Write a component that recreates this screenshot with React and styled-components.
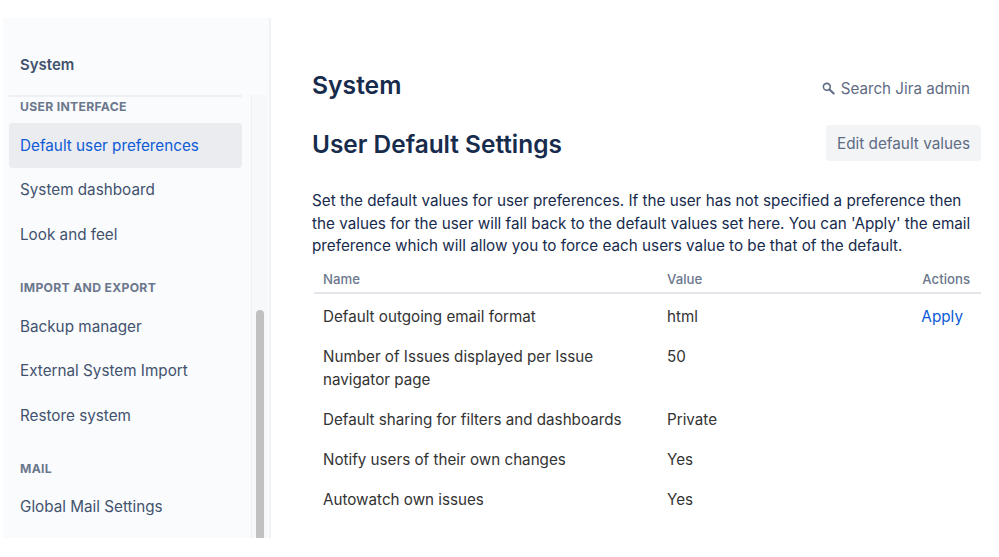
import React from "react";
import styled, { createGlobalStyle } from "styled-components";

const GlobalStyle = createGlobalStyle`
  html, body {
    margin: 0;
    padding: 0;
    background: #fff;
    font-family: Inter, "Noto Sans", sans-serif;
    overflow: hidden;
  }
`;

const Page = styled.div`
  width: 999px;
  height: 557px;
  box-sizing: border-box;
  padding: 18px 0 19px 3px;
  display: flex;
  overflow: hidden;
`;

const Sidebar = styled.aside`
  width: 266px;
  flex: none;
  background: #fafbfd;
  border-right: 2px solid #f1f2f4;
  display: flex;
  flex-direction: column;
`;

const SideTitle = styled.div`
  height: 77px;
  flex: none;
  box-sizing: border-box;
  padding: 38px 0 0 17px;
  font-size: 15px;
  line-height: 18px;
  font-weight: 600;
  color: #42526e;
`;

const SideBody = styled.div`
  flex: 1;
  min-height: 0;
  display: flex;
`;

const Nav = styled.nav`
  width: 233px;
  margin-left: 6px;
  flex: none;
  border-top: 2px solid #eef0f3;
  overflow: hidden;
`;

const Heading = styled.div`
  margin: ${(p) => p.$top}px 0 6px 11px;
  height: 20px;
  font-size: 12.2px;
  line-height: 20px;
  font-weight: 700;
  letter-spacing: 0.3px;
  color: #6b778c;
`;

const NavItem = styled.a`
  display: flex;
  align-items: center;
  height: 44.6px;
  padding-left: 11px;
  border-radius: 4px;
  font-size: 15.25px;
  color: ${(p) => (p.$active ? "#0c5bd6" : "#42526e")};
  background: ${(p) => (p.$active ? "#ebecf0" : "transparent")};
`;

const Track = styled.div`
  width: 16px;
  margin-left: 9px;
  box-sizing: border-box;
  padding: 0 3px 0 4px;
  flex: none;
  background: #f7f8f9;
  border-left: 1px solid #eeeff1;
  display: flex;
  flex-direction: column;
  justify-content: flex-end;
`;

const Thumb = styled.div`
  height: 228px;
  background: #c1c1c1;
  border-radius: 4px 4px 0 0;
`;

const Main = styled.main`
  flex: 1;
  min-width: 0;
  padding: 50px 18px 0 41px;
`;

const TopRow = styled.div`
  display: flex;
  justify-content: space-between;
  align-items: center;
  height: 34px;
`;

const Title = styled.h1`
  margin: 0;
  font-size: 24.7px;
  line-height: 34px;
  font-weight: 600;
  color: #172b4d;
`;

const SearchLink = styled.div`
  display: flex;
  align-items: center;
  gap: 6px;
  padding: 6px 11px 0 0;
  font-size: 15.2px;
  color: #5e6c84;
`;

const SettingsRow = styled.div`
  display: flex;
  justify-content: space-between;
  align-items: center;
  margin-top: 23px;
  height: 36px;
`;

const Subtitle = styled.h2`
  margin: 0;
  padding-top: 2px;
  font-size: 24.4px;
  line-height: 38px;
  font-weight: 600;
  color: #172b4d;
`;

const EditButton = styled.button`
  width: 155px;
  height: 36px;
  border: 0;
  padding: 0;
  border-radius: 4px;
  background: #f3f4f6;
  font: inherit;
  font-size: 15.3px;
  color: #5e6c84;
`;

const Intro = styled.p`
  margin: 29px 0 0;
  width: 669px;
  font-size: 15.25px;
  line-height: 22.5px;
  color: #172b4d;
`;

const Table = styled.table`
  width: 667px;
  margin: 8px 0 0 2px;
  border-collapse: collapse;
  table-layout: fixed;
`;

const HeadCell = styled.th`
  height: 27px;
  padding: 0 ${(p) => (p.$right ? "11px" : "9px")} 0 9px;
  box-sizing: border-box;
  border-bottom: 2px solid #e4e6eb;
  font-size: 13.2px;
  font-weight: 500;
  color: #6b778c;
  text-align: ${(p) => (p.$right ? "right" : "left")};
`;

const Cell = styled.td`
  padding: 11.75px 9px 5.25px;
  font-size: 15.2px;
  line-height: 23px;
  color: #333;
  vertical-align: top;
`;

const ApplyCell = styled(Cell)`
  text-align: right;
  padding-right: 18px;
`;

const ApplyLink = styled.a`
  color: #0c5bd6;
  font-size: 15.3px;
`;

function SearchIcon() {
  return (
    <svg width="13" height="13" viewBox="0 0 14 14" fill="none" stroke="#5e6c84">
      <circle cx="5.2" cy="5.2" r="3.7" strokeWidth="1.7" />
      <path d="M8 8l4.6 4.4" strokeWidth="2.2" strokeLinecap="round" />
    </svg>
  );
}

const rows = [
  ["Default outgoing email format", "html", true],
  ["Number of Issues displayed per Issue navigator page", "50"],
  ["Default sharing for filters and dashboards", "Private"],
  ["Notify users of their own changes", "Yes"],
  ["Autowatch own issues", "Yes"],
];

export default function App() {
  return (
    <Page>
      <GlobalStyle />
      <Sidebar>
        <SideTitle>System</SideTitle>
        <SideBody>
          <Nav>
            <Heading $top={0}>USER INTERFACE</Heading>
            <NavItem $active>Default user preferences</NavItem>
            <NavItem>System dashboard</NavItem>
            <NavItem>Look and feel</NavItem>
            <Heading $top={21}>IMPORT AND EXPORT</Heading>
            <NavItem>Backup manager</NavItem>
            <NavItem>External System Import</NavItem>
            <NavItem>Restore system</NavItem>
            <Heading $top={21}>MAIL</Heading>
            <NavItem>Global Mail Settings</NavItem>
          </Nav>
          <Track>
            <Thumb />
          </Track>
        </SideBody>
      </Sidebar>
      <Main>
        <TopRow>
          <Title>System</Title>
          <SearchLink>
            <SearchIcon />
            Search Jira admin
          </SearchLink>
        </TopRow>
        <SettingsRow>
          <Subtitle>User Default Settings</Subtitle>
          <EditButton>Edit default values</EditButton>
        </SettingsRow>
        <Intro>
          Set the default values for user preferences. If the user has not
          specified a preference then the values for the user will fall back to
          the default values set here. You can 'Apply' the email preference
          which will allow you to force each users value to be that of the
          default.
        </Intro>
        <Table>
          <colgroup>
            <col width="344" />
            <col width="215" />
            <col width="108" />
          </colgroup>
          <thead>
            <tr>
              <HeadCell>Name</HeadCell>
              <HeadCell>Value</HeadCell>
              <HeadCell $right>Actions</HeadCell>
            </tr>
          </thead>
          <tbody>
            {rows.map(([name, value, apply]) => (
              <tr key={name}>
                <Cell>{name}</Cell>
                <Cell>{value}</Cell>
                <ApplyCell>{apply && <ApplyLink>Apply</ApplyLink>}</ApplyCell>
              </tr>
            ))}
          </tbody>
        </Table>
      </Main>
    </Page>
  );
}
